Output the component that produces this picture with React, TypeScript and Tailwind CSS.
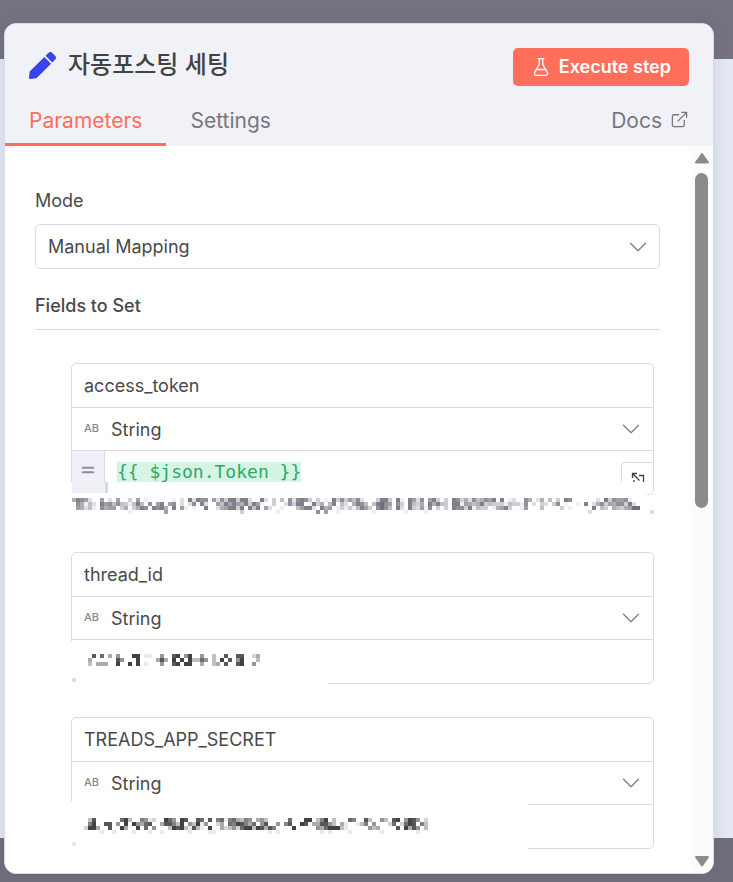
import { ChevronDown, Equal, ExternalLink, FlaskConical } from "lucide-react";
import { FaPen } from "react-icons/fa";

const HINT = [
  "587620060206003060100000010208287706273883882008203040727873030108373647" +
    "2000388308108627068303087352745768080120075025040308700000020837667100",
  "075142086747431484070680670202708200648686583861003002738801835048042058" +
    "7404897607308435085843088165458343331433170203203701001080257365773820",
  "065241075660350358708785080610100800256883808480620010004688208560131314" +
    "8630797408208326170303087738143301568300160004000030100000804305435699".slice(0, 70),
  "000000000000001000000006000000000000000000300000000100000000070600100000" +
    "0001000000010000100000000000000000000000000000000000000002000000000000",
];

const THREAD_ID = [
  "0807040500099011005008905900500300800880024",
  "4000000850009000048409090933750309080590003",
  "3044400900909010005008909900400340800890050",
];

const APP_SECRET = [
  "038000000793006512009750980087080671674365045300000700099036903000760083005308905985020",
  "069008805090954780048863905391500240769864705800506800980448853041001360500027027980630",
  "299400800940090705000398931831090042352799398486000090000054799931000005340000809485030",
  "000010010000100010010000001000011000000000000010100000000001010000100000001000000001000",
];

// redacted text, one digit of ink per 4px cell
function Mosaic({ rows, color, className }: { rows: string[]; color: string; className?: string }) {
  const cols = Math.max(...rows.map((row) => row.length));
  return (
    <svg
      aria-hidden="true"
      className={className}
      fill={color}
      height={rows.length * 4}
      shapeRendering="crispEdges"
      width={cols * 4}
    >
      {rows.flatMap((row, y) =>
        row.split("").map((ink, x) =>
          ink === "0" ? null : (
            <rect height="4" key={`${x}-${y}`} opacity={Number(ink) / 9} width="4" x={x * 4} y={y * 4} />
          ),
        ),
      )}
    </svg>
  );
}

function Chevron() {
  return (
    <ChevronDown
      className="pointer-events-none absolute top-1/2 right-[7px] -translate-y-1/2 text-[#7b7d87]"
      size={30}
      strokeWidth={1}
    />
  );
}

function ExpandIcon() {
  return (
    <svg className="h-4 w-4" fill="none" stroke="#414244" strokeWidth="1.3" viewBox="0 0 16 16">
      <path d="M2.500 7V2.500H7M2.500 2.500l7 7M9 4.500h4.500V13H4V9" />
    </svg>
  );
}

function FieldCard({ name, children }: { name: string; children: React.ReactNode }) {
  return (
    <div className="relative rounded-[5px] border border-[#d9dbe8]">
      <input
        aria-label="Name"
        className="block h-[43px] w-full bg-transparent px-3 outline-none"
        defaultValue={name}
      />
      <div className="relative flex h-[43px] items-center border-t border-[#d9dbe8]">
        <span className="w-[39px] shrink-0 pl-3 text-[11px] font-medium text-[#85878f]">AB</span>
        <select aria-label={`${name} type`} className="h-full min-w-0 flex-1 appearance-none pt-0.5 outline-none">
          <option>String</option>
        </select>
        <Chevron />
      </div>
      <div className="relative flex h-11 border-t border-[#d9dbe8]">{children}</div>
    </div>
  );
}

export default function App() {
  return (
    <div className="flex h-screen flex-col bg-[linear-gradient(to_bottom,#757380_59px,#e3e8f2_59px,#e3e8f2_calc(100%-44px),#706e7b_calc(100%-44px))] pt-[23px] pr-[19px] pb-2 pl-1 font-['Inter','Noto_Sans_CJK_KR',sans-serif] text-lg text-[#48494c]">
      <main className="flex min-h-0 flex-1 flex-col overflow-hidden rounded-xl border border-[#d9dbe8] bg-white shadow-[0_0_16px_rgba(60,60,100,0.12)]">
        <header className="bg-[#f1f2f8]">
          <div className="flex items-center justify-between px-6 pt-6">
            <div className="flex items-center gap-3 pb-1">
              <FaPen className="text-[#3a42e9]" size={27} />
              <h1 className="text-2xl font-medium text-[#414244]">자동포스팅 세팅</h1>
            </div>
            <button
              className="flex h-[38px] items-center gap-2 rounded-[5px] bg-[#ff6f5c] px-[18px] font-semibold text-white"
              type="button"
            >
              <FlaskConical size={20} strokeWidth={1.6} />
              Execute step
            </button>
          </div>
          <nav className="mt-2.5 flex h-[50px] text-[21px] text-[#77777c]">
            <button className="border-b-3 border-[#ff6f5c] px-6 pt-1 text-[#ff6f5c]" type="button">
              Parameters
            </button>
            <button className="border-b-3 border-transparent px-6 pt-1" type="button">
              Settings
            </button>
            <a className="ml-auto flex items-center gap-2 border-b-3 border-transparent pt-1 pr-6" href="#docs">
              Docs
              <ExternalLink className="mb-1" size={19} strokeWidth={1.6} />
            </a>
          </nav>
        </header>

        <div className="flex min-h-0 flex-1">
          <form className="min-w-0 flex-1 overflow-hidden px-[30px] pt-10">
            <label className="block leading-[30px]" htmlFor="mode">
              Mode
            </label>
            <div className="relative mt-2">
              <select
                className="block h-[45px] w-full appearance-none rounded-[5px] border border-[#d9dbe8] px-3 outline-none"
                id="mode"
              >
                <option>Manual Mapping</option>
              </select>
              <Chevron />
            </div>
            <h2 className="mt-[22px] border-b border-[#d9dbe8] pb-2 leading-[30px] font-medium">Fields to Set</h2>

            <div className="mt-[33px] flex flex-col gap-[33px] pr-1.5 pl-9">
              <div>
                <FieldCard name="access_token">
                  <span className="flex w-[33px] justify-center border-r border-[#d9dbe8] bg-[#f0f1f8] pt-2.5 text-[#8b8d96]">
                    <Equal size={18} strokeWidth={2.6} />
                  </span>
                  <div className="flex-1 px-3 pt-[11px]">
                    <input
                      aria-label="access_token value"
                      className="block h-5 field-sizing-content bg-[#d5f4e4] font-['DejaVu_Sans_Mono',monospace] text-[#2fa866] outline-none"
                      defaultValue="{{ $json.Token }}"
                    />
                  </div>
                  <button
                    aria-label="Expand"
                    className="absolute right-0 bottom-0 flex h-8 w-8 items-center justify-center rounded-tl-[5px] border-t border-l border-[#d9dbe8]"
                    type="button"
                  >
                    <ExpandIcon />
                  </button>
                  <span className="absolute top-[31px] right-1.5 -left-px flex h-[13px] bg-white pb-0.5 pl-px">
                    <i className="w-[33px] bg-[#f0f1f8]" />
                    <i className="w-[3px] bg-[#d5dae8]" />
                  </span>
                </FieldCard>
                <p className="flex h-6 justify-between pt-[3px] pl-px">
                  <Mosaic color="#6f707c" rows={HINT} />
                  <Mosaic className="self-start" color="#6f707c" rows={["00", "00", "00", "02"]} />
                </p>
              </div>

              <FieldCard name="thread_id">
                <input aria-label="thread_id value" className="w-full px-3 outline-none" />
                <span className="absolute top-px -left-px h-[44px] w-[257px] bg-white">
                  <Mosaic className="absolute top-[13px] left-[17px]" color="#414244" rows={THREAD_ID} />
                  <i className="absolute bottom-[3px] left-px h-1 w-1 bg-[#dce1ea]" />
                </span>
              </FieldCard>

              <FieldCard name="TREADS_APP_SECRET">
                <input aria-label="TREADS_APP_SECRET value" className="w-full px-3 outline-none" />
                <span className="absolute -top-1 -left-px h-12 w-[457px] bg-white">
                  <Mosaic className="absolute top-[17px] left-[13px]" color="#414244" rows={APP_SECRET} />
                  <i className="absolute bottom-[3px] left-px h-1 w-1 bg-[#e2e6ed]" />
                </span>
              </FieldCard>
            </div>
          </form>

          <div className="flex w-[23px] shrink-0 flex-col items-center bg-[#fcfcfc] pt-1.5 pb-1.5 text-[#8b8b8b]">
            <svg fill="currentColor" height="12" stroke="currentColor" strokeLinejoin="round" strokeWidth="2" width="16">
              <path d="M8 2l6 8.500H2z" />
            </svg>
            <div className="mt-[9px] h-[335px] w-[13px] rounded-full bg-[#8b8b8b]" />
            <svg
              className="mt-auto"
              fill="currentColor"
              height="12"
              stroke="currentColor"
              strokeLinejoin="round"
              strokeWidth="2"
              width="16"
            >
              <path d="M8 10.500l6-8.500H2z" />
            </svg>
          </div>
        </div>
      </main>
    </div>
  );
}
